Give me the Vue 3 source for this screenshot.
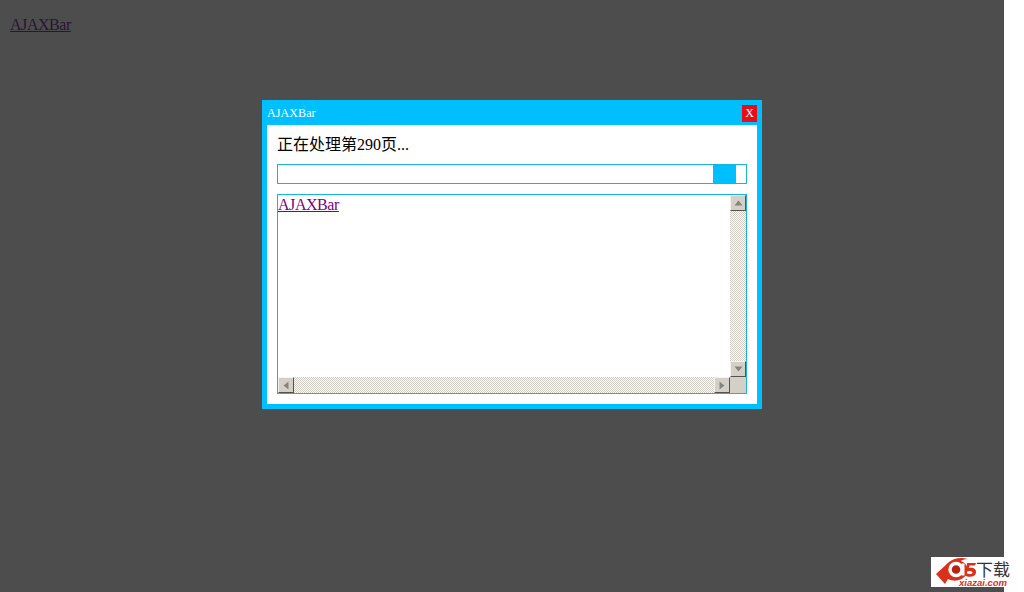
<script setup>
const title = 'AJAXBar'
const status = '正在处理第290页...'
</script>

<template>
  <div class="page">
    <div class="overlay">
      <a class="link" href="#">{{ title }}</a>
    </div>
    <div class="side"></div>

    <section class="dialog">
      <header class="bar">
        <span class="bar-title">{{ title }}</span>
        <button class="close">X</button>
      </header>
      <div class="body">
        <p class="status">{{ status }}</p>
        <div class="progress">
          <div class="spacer"></div>
          <div class="fill"></div>
          <div class="rest"></div>
        </div>
        <div class="frame">
          <div class="frame-top">
            <div class="content"><a class="inner-link" href="#">{{ title }}</a></div>
            <div class="vscroll">
              <div class="btn">
                <svg width="9" height="6" viewBox="0 0 9 6"><path d="M4.5 0.5 L8.5 5.5 H0.5 Z" fill="#85857f" /></svg>
              </div>
              <div class="track"></div>
              <div class="btn">
                <svg width="9" height="6" viewBox="0 0 9 6"><path d="M4.5 5.5 L8.5 0.5 H0.5 Z" fill="#85857f" /></svg>
              </div>
            </div>
          </div>
          <div class="hscroll">
            <div class="btn">
              <svg width="6" height="9" viewBox="0 0 6 9"><path d="M0.5 4.5 L5.5 0.5 V8.5 Z" fill="#85857f" /></svg>
            </div>
            <div class="track"></div>
            <div class="btn">
              <svg width="6" height="9" viewBox="0 0 6 9"><path d="M5.5 4.5 L0.5 0.5 V8.5 Z" fill="#85857f" /></svg>
            </div>
            <div class="corner"></div>
          </div>
        </div>
      </div>
    </section>

    <div class="logo">
      <svg class="mark" width="46" height="30" viewBox="0 0 46 30">
        <path d="M5 17 L18 5 C23 1 30 0 37 2 C33 2 31 3 30 4 C37 7 38 13 35 18 C31 24 23 25 17 22 L14 27 Z" fill="#d8321c" />
        <circle cx="25" cy="12.5" r="6" fill="#b8200f" stroke="#fff" stroke-width="3.4" />
        <path d="M32 6.5 V18.5" stroke="#fff" stroke-width="3" />
        <path d="M36 6 H45 L44 8.5 H38.5 L38 11 C42 10 45.5 12 45 15.5 C44.5 20 38 21 34 18.5 L35.5 16 C37.5 17.5 41 17.5 41.5 15.5 C41.5 14 38.5 13.5 35.5 14.5 Z" fill="#d8321c" />
      </svg>
      <span class="logo-cn">下载</span>
      <span class="logo-en">xiazai.com</span>
    </div>
  </div>
</template>

<style>
html, body { margin: 0; background: #fff; }
</style>

<style scoped>
.page {
  position: relative;
  width: 1024px;
  height: 592px;
  display: flex;
  overflow: hidden;
  font-family: "Liberation Serif", "Noto Sans CJK SC", serif;
}
.overlay {
  width: 1004px;
  height: 592px;
  box-sizing: border-box;
  padding: 16px 10px;
  background: #4d4d4d;
  font-size: 16px;
  line-height: 18px;
}
.side { flex: 1; background: #fff; }
.link { color: #2b1435; text-decoration: underline; letter-spacing: -0.45px; }

.dialog {
  position: absolute;
  left: 262px;
  top: 100px;
  width: 500px;
  height: 309px;
  box-sizing: border-box;
  border: 5px solid #00bfff;
  border-top-width: 0;
  background: #00bfff;
  display: flex;
  flex-direction: column;
}
.bar {
  height: 25px;
  flex: none;
  display: flex;
  align-items: center;
  justify-content: space-between;
  color: #fff;
  font-size: 12px;
}
.bar-title { height: 25px; line-height: 26px; letter-spacing: 0.1px; }
.close {
  width: 15px;
  height: 17px;
  margin: 1px 0 0;
  padding: 0;
  border: 0;
  background: #e60f19;
  color: #fff;
  font: 12px/17px "Liberation Serif", serif;
}
.body {
  flex: 1;
  background: #fff;
  box-sizing: border-box;
  padding: 10px;
  display: flex;
  flex-direction: column;
}
.status {
  margin: 1px 0 0;
  height: 18px;
  font-size: 16px;
  line-height: 18px;
  color: #000;
}
.progress {
  margin-top: 10px;
  height: 20px;
  box-sizing: border-box;
  border: 1px solid #18b4dc;
  display: flex;
  flex: none;
}
.spacer { width: 435px; }
.fill { width: 23px; background: #00bfff; }
.rest { flex: 1; }

.frame {
  margin-top: 10px;
  height: 200px;
  flex: none;
  box-sizing: border-box;
  border: 1px solid #18b4dc;
  display: flex;
  flex-direction: column;
}
.frame-top { flex: 1; display: flex; min-height: 0; }
.content {
  flex: 1;
  font-size: 16px;
  line-height: 18px;
  padding: 1px 0 0;
}
.inner-link { color: #800080; text-decoration: underline; letter-spacing: -0.45px; }
.vscroll { width: 16px; display: flex; flex-direction: column; flex: none; }
.hscroll { height: 16px; display: flex; flex: none; }
.track {
  flex: 1;
  background-color: #fff;
  background-image: conic-gradient(#cfcbc3 25%, #fff 0 50%, #cfcbc3 0 75%, #fff 0);
  background-size: 2px 2px;
}
.btn {
  width: 16px;
  height: 16px;
  flex: none;
  box-sizing: border-box;
  background: #d4d0c8;
  border-style: solid;
  border-width: 1px;
  border-color: #f4f3f0 #55534f #55534f #f4f3f0;
  display: flex;
  align-items: center;
  justify-content: center;
}
.corner { width: 16px; flex: none; background: #d4d0c8; }

.logo {
  position: absolute;
  left: 931px;
  top: 557px;
  width: 80px;
  height: 30px;
  background: #fff;
}
.mark { position: absolute; left: 0; top: 0; }
.logo-cn {
  position: absolute;
  left: 45px;
  top: 4px;
  font: 17px/16px "Noto Sans CJK SC", sans-serif;
  color: #333;
}
.logo-en {
  position: absolute;
  left: 28px;
  top: 22px;
  font: italic 700 9.5px/8px "Liberation Sans", sans-serif;
  color: #d8321c;
}
</style>
